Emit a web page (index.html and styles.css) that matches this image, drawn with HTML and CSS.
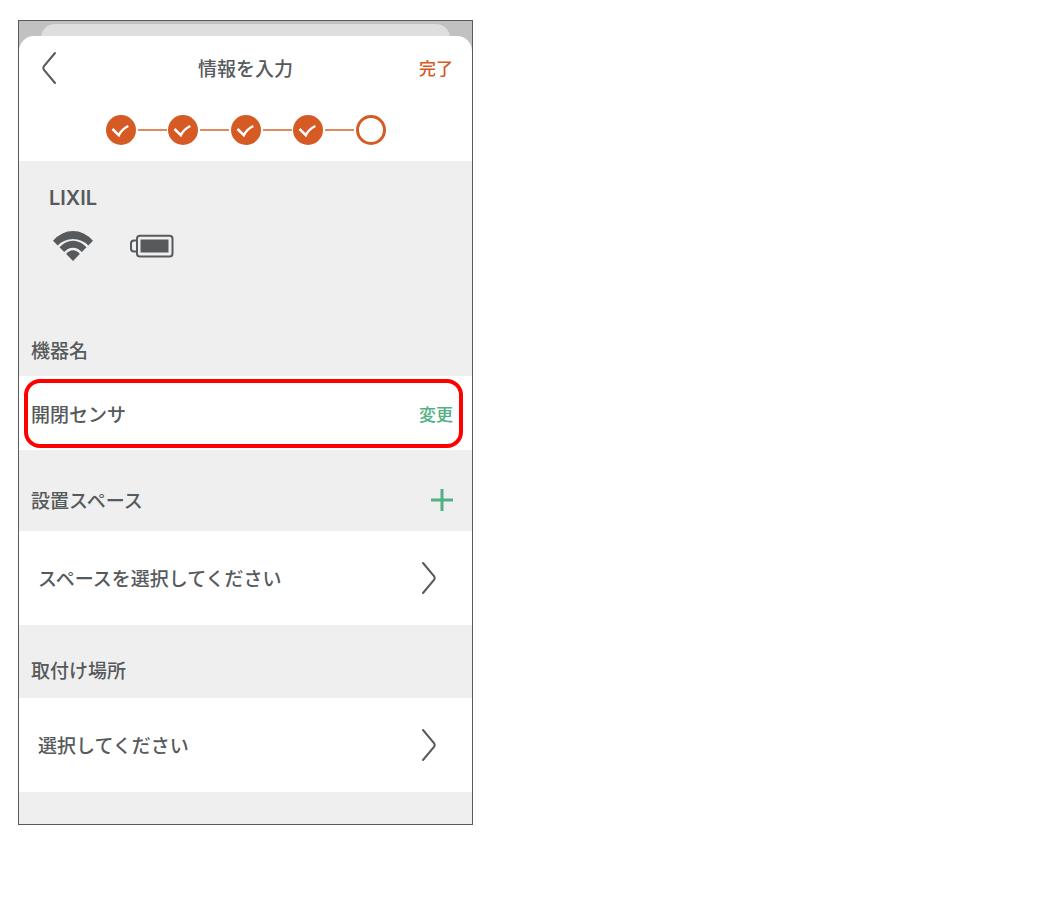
FILE: index.html
```html
<!DOCTYPE html>
<html lang="ja">
<head>
<meta charset="utf-8">
<meta name="viewport" content="width=device-width, initial-scale=1">
<title>情報を入力</title>
<link rel="stylesheet" href="styles.css">
</head>
<body>
<main class="phone">
  <div class="backdrop"><div class="backdrop-card"></div></div>
  <header class="sheet-header">
    <div class="title-bar">
      <button class="icon-button" type="button" aria-label="戻る">
        <svg class="chevron" viewBox="0 0 16 34"><path d="M14 2 2.800 15.400q-1 1.600 0 3.200L14 32"/></svg>
      </button>
      <h1 class="title">情報を入力</h1>
      <button class="text-button done" type="button">完了</button>
    </div>
    <ol class="steps">
      <li class="step complete"><svg class="check" viewBox="0 0 30 30"><path d="M6.500 14l6.300 6.200q2.500-5.500 9.500-9.200"/></svg></li>
      <li class="step complete"><svg class="check" viewBox="0 0 30 30"><path d="M6.500 14l6.300 6.200q2.500-5.500 9.500-9.200"/></svg></li>
      <li class="step complete"><svg class="check" viewBox="0 0 30 30"><path d="M6.500 14l6.300 6.200q2.500-5.500 9.500-9.200"/></svg></li>
      <li class="step complete"><svg class="check" viewBox="0 0 30 30"><path d="M6.500 14l6.300 6.200q2.500-5.500 9.500-9.200"/></svg></li>
      <li class="step"></li>
    </ol>
  </header>

  <section class="device">
    <p class="brand">LIXIL</p>
    <div class="status">
      <svg class="wifi" viewBox="0 0 42 32" role="img" aria-label="Wi-Fi">
        <path d="M1 10.800Q9.800 1 21 1t20 9.800l-4.700 4.700Q30 9 21 9T5.700 15.500z"/>
        <path d="M7.500 17.300Q13.200 10.700 21 10.700t13.500 6.600l-4.700 4.700Q26 17.700 21 17.700T12.200 22z"/>
        <path d="M14.200 24Q17.200 20.300 21 20.300T27.800 24L21 31z"/>
      </svg>
      <svg class="battery" viewBox="0 0 44 24" role="img" aria-label="バッテリー">
        <rect class="line" x="7.500" y="1.800" width="35.500" height="20.800" rx="3"/>
        <path class="line" d="M7.500 6.500H4.500q-3 0-3 3v5q0 3 3 3h3"/>
        <rect x="11" y="5.500" width="28" height="13"/>
      </svg>
    </div>
    <h2 class="label">機器名</h2>
  </section>
  <div class="name-row">
    <div class="name-frame">
      <span>開閉センサ</span>
      <button class="text-button change" type="button">変更</button>
    </div>
  </div>

  <div class="section-head space-head">
    <h2 class="label">設置スペース</h2>
    <button class="icon-button" type="button" aria-label="追加">
      <svg class="plus" viewBox="0 0 22 22"><path d="M11 0v22M0 11h22"/></svg>
    </button>
  </div>
  <button class="select-row" type="button">
    <span>スペースを選択してください</span>
    <svg class="chevron" viewBox="0 0 16 34"><path d="M2 2 13.200 15.400q1 1.600 0 3.200L2 32"/></svg>
  </button>

  <div class="section-head">
    <h2 class="label">取付け場所</h2>
  </div>
  <button class="select-row" type="button">
    <span>選択してください</span>
    <svg class="chevron" viewBox="0 0 16 34"><path d="M2 2 13.200 15.400q1 1.600 0 3.200L2 32"/></svg>
  </button>
  <div class="sheet-end"></div>
</main>
</body>
</html>
```
FILE: styles.css
```css
:root {
  --ink: #565a5c;
  --orange: #d65a24;
  --green: #52b083;
  --gray: #efefef;
}

* {
  box-sizing: border-box;
}

body {
  margin: 0;
  padding: 20px 18px;
  background: #fff;
  color: var(--ink);
  font: 500 19px/28px "Noto Sans CJK JP", sans-serif;
}

h1, h2, p, ol {
  margin: 0;
  padding: 0;
  font: inherit;
}

button {
  padding: 0;
  border: 0;
  background: none;
  color: inherit;
  font: inherit;
  cursor: pointer;
}

svg {
  display: block;
  fill: none;
}

.phone {
  max-width: 455px;
  border: 1px solid #58595b;
  background: var(--gray);
}

.backdrop {
  height: 31px;
  padding: 3px 22px 0;
  margin-bottom: -16px;
  background: #c1c1c1;
}

.backdrop-card {
  height: 28px;
  border-radius: 14px 14px 0 0;
  background: #dedede;
}

.sheet-header {
  position: relative;
  padding-bottom: 16px;
  border-radius: 15px 15px 0 0;
  background: #fff;
}

.title-bar {
  display: grid;
  grid-template-columns: 1fr auto 1fr;
  align-items: center;
  height: 64px;
  padding: 0 19px 0 22px;
}

.title {
  padding-right: 3px;
}

.icon-button {
  justify-self: start;
}

.chevron {
  width: 16px;
  height: 34px;
  stroke: var(--ink);
  stroke-width: 2;
  stroke-linecap: round;
}

.text-button {
  font-size: 17px;
}

.done {
  justify-self: end;
  color: var(--orange);
}

.steps {
  display: flex;
  justify-content: space-between;
  width: 280px;
  margin: 15px auto 0;
  list-style: none;
}

.step {
  position: relative;
  width: 30px;
  height: 30px;
  border: 3px solid var(--orange);
  border-radius: 50%;
}

.complete {
  border: 0;
  background: var(--orange);
}

.complete::after {
  content: "";
  position: absolute;
  top: 14px;
  left: 32px;
  width: 29px;
  height: 2px;
  background: #e08a63;
}

.check {
  width: 30px;
  height: 30px;
  stroke: #fff;
  stroke-width: 2.500;
}

.device {
  padding: 23px 12px 12px;
}

.brand {
  padding-left: 18px;
  font: 600 20px/28px Inter, sans-serif;
}

.status {
  display: flex;
  align-items: center;
  gap: 35px;
  margin: 18px 0 74px;
  padding-left: 21px;
}

.wifi {
  width: 42px;
  height: 32px;
  fill: var(--ink);
}

.battery {
  width: 45px;
  height: 24px;
  fill: var(--ink);
}

.line {
  fill: none;
  stroke: var(--ink);
  stroke-width: 2;
}

.name-row {
  padding: 3px 9px 2px 5px;
  background: #fff;
}

.name-frame {
  display: flex;
  align-items: center;
  justify-content: space-between;
  height: 69px;
  padding: 0 6px 0 3px;
  border: 4px solid #f00;
  border-radius: 16px;
}

.change {
  color: var(--green);
}

.section-head {
  display: flex;
  align-items: center;
  justify-content: space-between;
  padding: 31px 19px 14px 12px;
}

.space-head {
  padding-top: 36px;
  padding-bottom: 17px;
}

.plus {
  width: 22px;
  height: 22px;
  stroke: var(--green);
  stroke-width: 3;
}

.select-row {
  display: flex;
  align-items: center;
  justify-content: space-between;
  width: 100%;
  height: 94px;
  padding: 0 35px 0 19px;
  background: #fff;
}

.sheet-end {
  height: 32px;
}
```
